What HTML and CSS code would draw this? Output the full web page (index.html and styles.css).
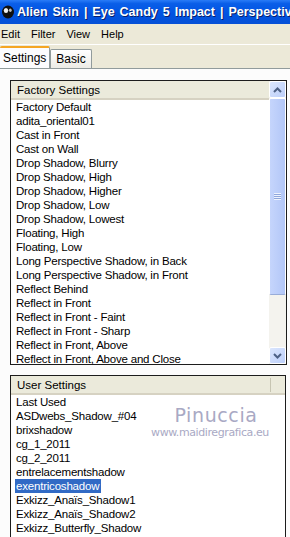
FILE: index.html
```html
<!DOCTYPE html>
<html lang="en">
<head>
    <meta charset="UTF-8">
    <title>Alien Skin | Eye Candy 5 Impact | Perspective Shadow</title>
    <link rel="stylesheet" href="styles.css">
</head>
<body>
    <div class="window">
        <div class="titlebar">
            <svg class="app-icon" width="14" height="14" viewBox="0 0 14 14">
                <ellipse cx="7" cy="7" rx="6" ry="6.5" fill="#101010"/>
                <ellipse cx="5" cy="5.5" rx="2.2" ry="2.6" fill="#f0f0f0"/>
                <ellipse cx="9.3" cy="5.2" rx="1.4" ry="1.8" fill="#bcbcbc"/>
            </svg>
            <span class="title">Alien Skin | Eye Candy 5 Impact | Perspective Shadow</span>
        </div>

        <div class="menubar">
            <span class="menu-item">Edit</span>
            <span class="menu-item">Filter</span>
            <span class="menu-item">View</span>
            <span class="menu-item">Help</span>
        </div>

        <div class="tabs">
            <div class="tab active">Settings</div>
            <div class="tab">Basic</div>
        </div>

        <div class="panel">
            <div class="listbox factory">
                <div class="list-main">
                    <div class="list-header">Factory Settings</div>
                    <div class="list-items">
                        <div class="item">Factory Default</div>
                        <div class="item">adita_oriental01</div>
                        <div class="item">Cast in Front</div>
                        <div class="item">Cast on Wall</div>
                        <div class="item">Drop Shadow, Blurry</div>
                        <div class="item">Drop Shadow, High</div>
                        <div class="item">Drop Shadow, Higher</div>
                        <div class="item">Drop Shadow, Low</div>
                        <div class="item">Drop Shadow, Lowest</div>
                        <div class="item">Floating, High</div>
                        <div class="item">Floating, Low</div>
                        <div class="item">Long Perspective Shadow, in Back</div>
                        <div class="item">Long Perspective Shadow, in Front</div>
                        <div class="item">Reflect Behind</div>
                        <div class="item">Reflect in Front</div>
                        <div class="item">Reflect in Front - Faint</div>
                        <div class="item">Reflect in Front - Sharp</div>
                        <div class="item">Reflect in Front, Above</div>
                        <div class="item">Reflect in Front, Above and Close</div>
                    </div>
                </div>
                <div class="scrollbar">
                    <div class="scroll-btn">
                        <svg width="9" height="6" viewBox="0 0 9 6"><path d="M1 5 L4.5 1.5 L8 5" fill="none" stroke="#4d6185" stroke-width="2"/></svg>
                    </div>
                    <div class="scroll-thumb">
                        <div class="grip"></div>
                    </div>
                    <div class="scroll-track"></div>
                    <div class="scroll-btn">
                        <svg width="9" height="6" viewBox="0 0 9 6"><path d="M1 1 L4.5 4.5 L8 1" fill="none" stroke="#4d6185" stroke-width="2"/></svg>
                    </div>
                </div>
            </div>

            <div class="listbox user">
                <div class="list-main">
                    <div class="list-header">User Settings<span class="header-split"></span></div>
                    <div class="list-items">
                        <div class="item">Last Used</div>
                        <div class="item">ASDwebs_Shadow_#04</div>
                        <div class="item">brixshadow</div>
                        <div class="item">cg_1_2011</div>
                        <div class="item">cg_2_2011</div>
                        <div class="item">entrelacementshadow</div>
                        <div class="item"><span class="selected">exentricoshadow</span></div>
                        <div class="item">Exkizz_Anaïs_Shadow1</div>
                        <div class="item">Exkizz_Anaïs_Shadow2</div>
                        <div class="item">Exkizz_Butterfly_Shadow</div>
                    </div>
                </div>
                <div class="watermark">
                    <div class="wm-name">Pinuccia</div>
                    <div class="wm-url">www.maidiregrafica.eu</div>
                </div>
            </div>
        </div>
    </div>
</body>
</html>
```

FILE: styles.css
```css
body {
    margin: 0;
    padding: 0;
    width: 290px;
    height: 537px;
    overflow: hidden;
    background: #fcfcfc;
    font-family: "Liberation Sans", Arial, sans-serif;
}
.window {
    width: 290px;
    height: 537px;
    overflow: hidden;
    display: flex;
    flex-direction: column;
}
.titlebar {
    height: 24px;
    flex: none;
    display: flex;
    align-items: center;
    background: linear-gradient(to bottom, #2a7cf7 0%, #0a5ee8 15%, #0053e1 60%, #0650d6 100%);
    white-space: nowrap;
    overflow: hidden;
}
.app-icon {
    margin-left: 1px;
    margin-right: 2px;
    flex: none;
}
.title {
    color: white;
    font-family: "Liberation Sans", Arial, sans-serif;
    font-weight: bold;
    font-size: 12.5px;
    word-spacing: 1.5px;
    text-shadow: 1px 1px 0 #0a1f6a;
}
.menubar {
    height: 20px;
    flex: none;
    display: flex;
    align-items: center;
    gap: 11px;
    padding-left: 1px;
    background: #ece9d8;
    border-bottom: 1px solid #ffffff;
    font-size: 11px;
    color: #000;
}
.tabs {
    height: 23px;
    flex: none;
    display: flex;
    align-items: flex-end;
    background: #ece9d8;
    font-size: 12px;
}
.tab {
    height: 18px;
    padding: 0 5px;
    display: flex;
    align-items: center;
    background: linear-gradient(to bottom, #ffffff, #ecebe5);
    border: 1px solid #919b9c;
    border-bottom: none;
    border-radius: 2px 2px 0 0;
}
.tab.active {
    height: 20px;
    padding: 0 3px;
    background: #fcfcfe;
    border-top: 2px solid #f5a623;
    border-left: none;
    position: relative;
    z-index: 1;
}
.panel {
    flex: 1;
    background: #fcfcfc;
    border-top: 1px solid #919b9c;
    padding: 11px 4px 0 10px;
    display: flex;
    flex-direction: column;
    gap: 10px;
}
.listbox {
    display: flex;
    border: 1px solid #1c1c1c;
    background: #ffffff;
    font-size: 11.5px;
    color: #000;
    position: relative;
}
.listbox.factory {
    height: 283px;
    width: 275px;
}
.listbox.user {
    flex: 1;
    width: 274px;
    border-bottom: none;
}
.list-main {
    flex: 1;
    overflow: hidden;
}
.list-header {
    height: 17px;
    display: flex;
    align-items: center;
    padding-left: 6px;
    background: #ebeadb;
    border-bottom: 2px solid #d6d2c2;
    position: relative;
}
.header-split {
    position: absolute;
    right: 14px;
    top: 2px;
    width: 1px;
    height: 14px;
    background: #c7c5b2;
}
.item {
    height: 14px;
    line-height: 14px;
    padding-left: 5px;
    white-space: nowrap;
    letter-spacing: -0.2px;
}
.selected {
    background: #316ac5;
    color: #ffffff;
    padding: 0 2px 0 1px;
    margin-left: -1px;
    display: inline-block;
}
.scrollbar {
    width: 17px;
    flex: none;
    display: flex;
    flex-direction: column;
    background: #f4f3ee;
}
.scroll-btn {
    height: 17px;
    flex: none;
    display: flex;
    align-items: center;
    justify-content: center;
    background: linear-gradient(to bottom right, #dbe6fd, #bccffa);
    border: 1px solid #ffffff;
    border-radius: 2px;
    box-sizing: border-box;
}
.scroll-thumb {
    height: 197px;
    flex: none;
    display: flex;
    align-items: center;
    justify-content: center;
    background: linear-gradient(to right, #c5d5fc, #bccefa 50%, #b2c6f7);
    border: 1px solid #ffffff;
    border-bottom-color: #98acd8;
    border-radius: 2px;
    box-sizing: border-box;
}
.grip {
    width: 7px;
    height: 7px;
    background: repeating-linear-gradient(to bottom, #eef3fe 0, #eef3fe 1px, #8fa7dc 1px, #8fa7dc 2px);
}
.scroll-track {
    flex: 1;
}
.watermark {
    position: absolute;
    left: 121px;
    top: 29px;
    width: 156px;
    text-align: center;
    color: #a9a9c4;
    font-family: "DejaVu Sans", sans-serif;
}
.wm-name {
    font-size: 19px;
    line-height: 21px;
    letter-spacing: 0.6px;
    padding-left: 12px;
}
.wm-url {
    font-size: 11px;
    line-height: 13px;
    letter-spacing: -0.4px;
}
```
